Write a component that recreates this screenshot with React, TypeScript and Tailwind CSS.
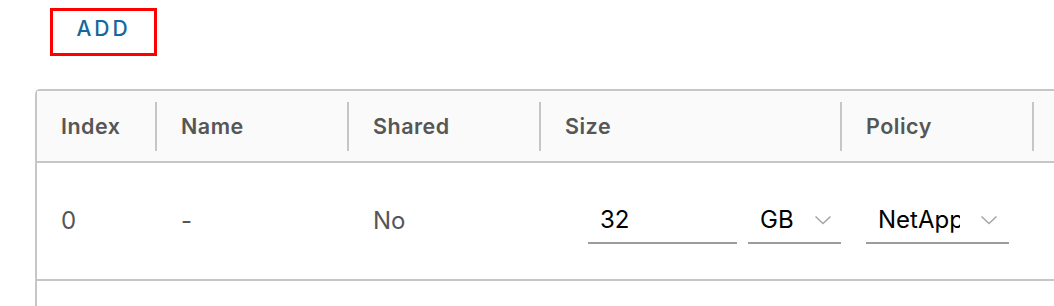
const cols = [
  { key: 'index', label: 'Index', width: 'w-[120px]' },
  { key: 'name', label: 'Name', width: 'w-[192px]' },
  { key: 'shared', label: 'Shared', width: 'w-[192px]' },
  { key: 'size', label: 'Size', width: 'w-[301px]' },
  { key: 'policy', label: 'Policy', width: 'w-[192px]' },
  { key: 'extra', label: '', width: 'w-[200px]' },
];

function Chevron() {
  return (
    <svg width="18" height="10" viewBox="0 0 18 10" fill="none" className="shrink-0">
      <path d="M1.5 1.5 L9 8.5 L16.5 1.5" stroke="#a6a6a6" strokeWidth="1.6" />
    </svg>
  );
}

function HeaderCell({ label, width }: { label: string; width: string }) {
  return (
    <div className={`${width} shrink-0 flex items-center`}>
      <div className="flex-1 pl-[24px] text-[21.5px] font-semibold tracking-[0.5px] text-[#565656]">{label}</div>
      <div className="w-[2px] h-[49px] bg-[#c6c6c6]" />
    </div>
  );
}

export default function App() {
  return (
    <div
      className="w-[1054px] h-[306px] overflow-hidden bg-white pl-[35px] pt-[8px]"
      style={{ fontFamily: 'Inter, "Noto Sans", sans-serif' }}
    >
      <button className="ml-[15px] w-[107px] h-[48px] pb-[6px] border-[3px] border-[#ff0000] flex items-center justify-center text-[21px] font-medium tracking-[3px] text-[#15679c]">
        ADD
      </button>

      <div className="mt-[33px] w-[1250px] border-l-2 border-t-2 border-[#c6c6c6] rounded-tl-[5px]">
        <div className="flex h-[72px] bg-[#fafafa] border-b-2 border-[#c6c6c6]">
          {cols.map((c) => (
            <HeaderCell key={c.key} label={c.label} width={c.width} />
          ))}
        </div>

        <div className="flex h-[118px] items-center border-b-2 border-[#c6c6c6] text-[24px] text-[#565656]">
          <div className="w-[120px] shrink-0 pl-[24px]">0</div>
          <div className="w-[192px] shrink-0 pl-[24px]">-</div>
          <div className="w-[192px] shrink-0 pl-[24px]">No</div>
          <div className="w-[301px] shrink-0 pl-[47px] flex items-center gap-[11px]">
            <div className="w-[149px] h-[46px] border-b-2 border-[#9c9c9c] px-[12px] flex items-center text-black">
              32
            </div>
            <div className="w-[93px] h-[46px] border-b-2 border-[#9c9c9c] pl-[12px] pr-[9px] flex items-center justify-between text-black">
              <span>GB</span>
              <Chevron />
            </div>
          </div>
          <div className="w-[192px] shrink-0 pl-[24px]">
            <div className="w-[143px] h-[46px] border-b-2 border-[#9c9c9c] pl-[12px] pr-[11px] flex items-center gap-[20px] text-black">
              <span className="w-[82px] overflow-hidden whitespace-nowrap">NetApp</span>
              <Chevron />
            </div>
          </div>
        </div>

        <div className="h-[40px]" />
      </div>
    </div>
  );
}
